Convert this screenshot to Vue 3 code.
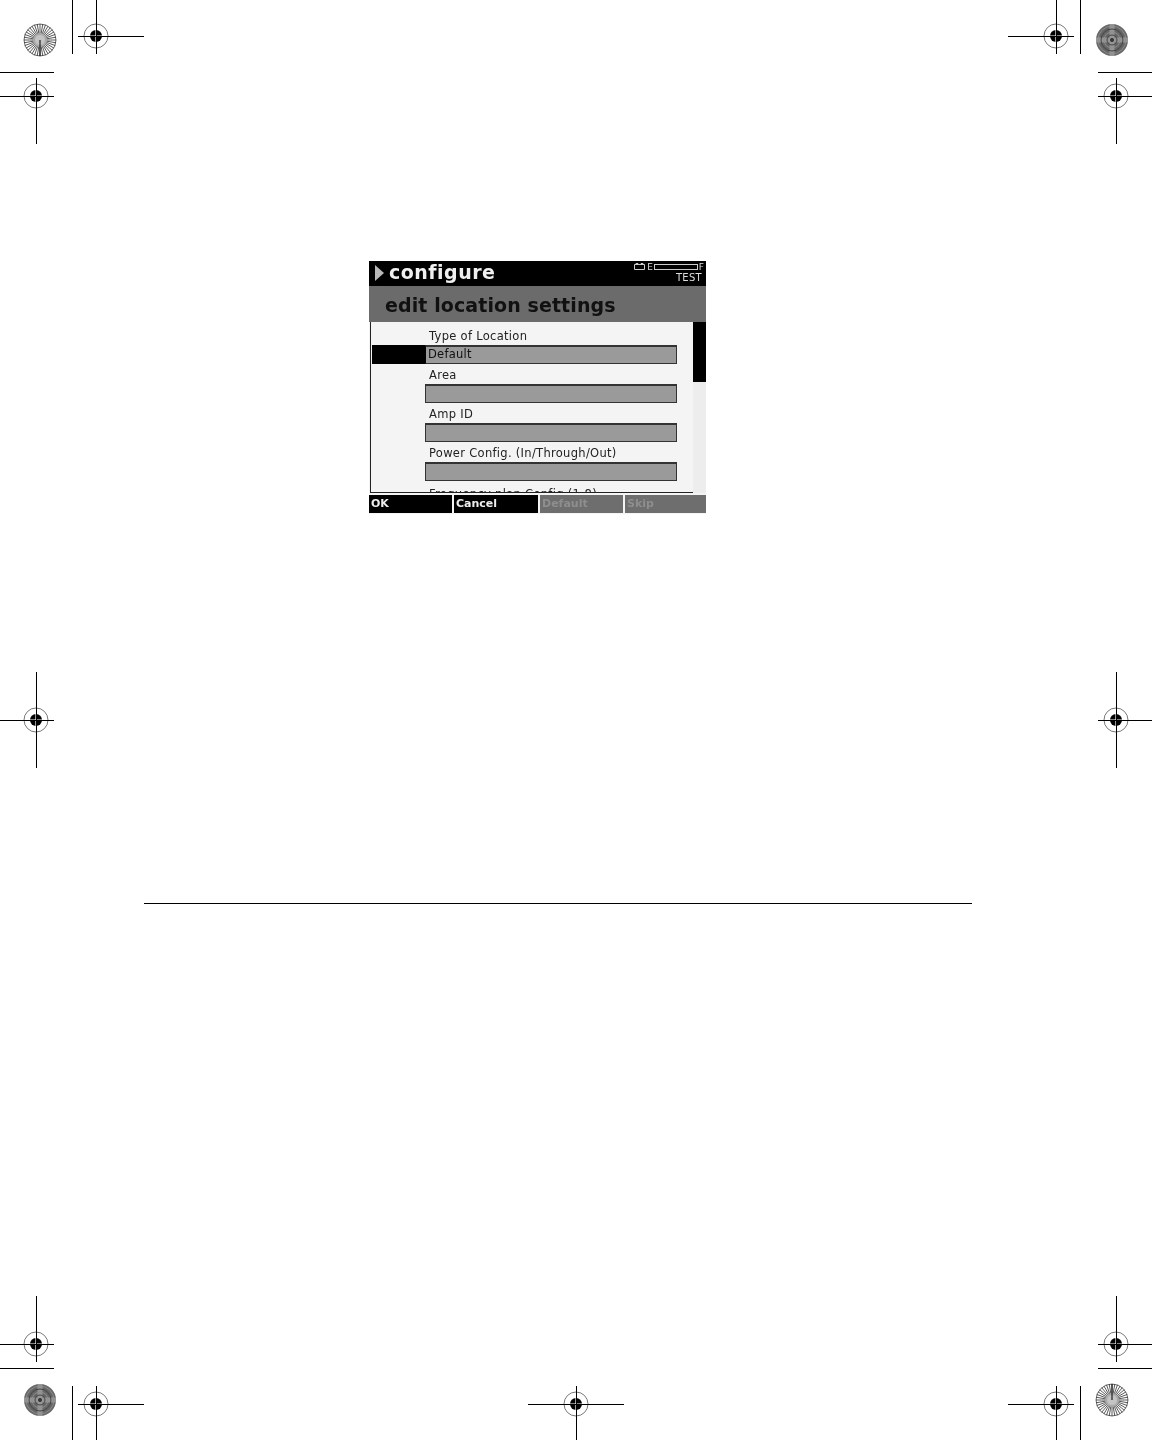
<template>
  <div class="page">
    <!-- printer's marks, each sits at its own spot on the sheet -->
    <svg class="marks" width="1152" height="1440" viewBox="0 0 1152 1440">
      <g stroke="#000" stroke-width="1" fill="none">
        <line
          v-for="(l, i) in trimLines"
          :key="'t' + i"
          :x1="l[0]"
          :y1="l[1]"
          :x2="l[2]"
          :y2="l[3]"
        />
      </g>
      <g v-for="m in regMarks" :key="m.x + '-' + m.y">
        <circle :cx="m.x" :cy="m.y" r="12" fill="none" stroke="#555" stroke-width="0.8" />
        <circle :cx="m.x" :cy="m.y" r="6" fill="#000" />
        <path
          :d="`M${m.x - 6} ${m.y}H${m.x + 6}M${m.x} ${m.y - 6}V${m.y + 6}`"
          stroke="#fff"
          stroke-width="1.2"
        />
        <path :d="m.cross" stroke="#000" stroke-width="1" fill="none" />
      </g>
      <g v-for="s in lightBursts" :key="s.x">
        <circle :cx="s.x" :cy="s.y" r="16" fill="#fff" stroke="#444" stroke-width="0.8" />
        <line
          v-for="(r, i) in rays(s.x, s.y)"
          :key="i"
          :x1="r[0]"
          :y1="r[1]"
          :x2="r[2]"
          :y2="r[3]"
          stroke="#222"
          stroke-width="0.75"
        />
        <circle :cx="s.x" :cy="s.y" r="7" fill="#b5b5b5" opacity="0.8" />
        <line :x1="s.x" :y1="s.y" :x2="s.x" :y2="s.tail" stroke="#000" stroke-width="1" />
      </g>
      <g v-for="s in darkBursts" :key="s.x">
        <circle :cx="s.x" :cy="s.y" r="16" fill="#666" />
        <path
          :d="`M${s.x - 16} ${s.y}H${s.x + 16}M${s.x} ${s.y - 16}V${s.y + 16}`"
          stroke="#a2a2a2"
          stroke-width="5"
          opacity="0.8"
        />
        <circle :cx="s.x" :cy="s.y" r="14" fill="none" stroke="#8c8c8c" stroke-width="1" />
        <circle :cx="s.x" :cy="s.y" r="11" fill="none" stroke="#444" stroke-width="1" />
        <circle :cx="s.x" :cy="s.y" r="8" fill="none" stroke="#8c8c8c" stroke-width="1" />
        <circle :cx="s.x" :cy="s.y" r="5" fill="none" stroke="#444" stroke-width="1" />
        <circle :cx="s.x" :cy="s.y" r="2" fill="#333" />
      </g>
    </svg>

    <div class="screen">
      <div class="top-bar">
        <span class="arrow"></span>
        <span class="app-name">configure</span>
        <div class="status">
          <div class="gauge">
            <svg class="batt" width="11" height="7" viewBox="0 0 11 7">
              <path d="M.5 1.5h10v5H.5zM2 1.5V.5h2v1M7 1.5V.5h2v1" fill="none" stroke="#ccc" />
            </svg>
            <span>E</span>
            <span class="gauge-bar"></span>
            <span>F</span>
          </div>
          <div class="mode">TEST</div>
        </div>
      </div>
      <div class="title-bar">edit location settings</div>
      <div class="body">
        <div class="list">
          <div v-for="(f, i) in fields" :key="f.label" class="item">
            <div class="label">{{ f.label }}</div>
            <div class="row">
              <span class="marker" :class="{ on: i === 0 }"></span>
              <div class="field" :class="{ on: i === 0 }">{{ f.value }}</div>
            </div>
          </div>
        </div>
        <div class="scrollbar"><div class="thumb"></div></div>
      </div>
      <div class="softkeys">
        <div
          v-for="k in softkeys"
          :key="k.text"
          class="key"
          :class="{ off: k.off }"
        >
          {{ k.text }}
        </div>
      </div>
    </div>

    <div class="rule"></div>
  </div>
</template>

<script setup>
const fields = [
  { label: "Type of Location", value: "Default" },
  { label: "Area", value: "" },
  { label: "Amp ID", value: "" },
  { label: "Power Config. (In/Through/Out)", value: "" },
  { label: "Frequency plan Config (1-8)", value: "" },
];

const softkeys = [
  { text: "OK", off: false },
  { text: "Cancel", off: false },
  { text: "Default", off: true },
  { text: "Skip", off: true },
];

// x, y, then how far each arm of the cross runs: left, right, up, down
const mark = (x, y, l, r, u, d) => ({
  x,
  y,
  cross: `M${x - l} ${y + 0.5}H${x + r}M${x + 0.5} ${y - u}V${y + d}`,
});

const regMarks = [
  mark(96, 36, 18, 48, 36, 18),
  mark(36, 96, 36, 18, 18, 48),
  mark(1056, 36, 48, 18, 36, 18),
  mark(1116, 96, 18, 36, 18, 48),
  mark(36, 720, 36, 18, 48, 48),
  mark(1116, 720, 18, 36, 48, 48),
  mark(36, 1344, 36, 18, 48, 18),
  mark(1116, 1344, 18, 36, 48, 18),
  mark(96, 1404, 18, 48, 18, 36),
  mark(1056, 1404, 48, 18, 18, 36),
  mark(576, 1404, 48, 48, 18, 36),
];

const trimLines = [
  [72.5, 0, 72.5, 54],
  [0, 72.5, 54, 72.5],
  [1080.5, 0, 1080.5, 54],
  [1098, 72.5, 1152, 72.5],
  [0, 1368.5, 54, 1368.5],
  [72.5, 1386, 72.5, 1440],
  [1098, 1368.5, 1152, 1368.5],
  [1080.5, 1386, 1080.5, 1440],
];

const lightBursts = [
  { x: 40, y: 40, tail: 56 },
  { x: 1112, y: 1400, tail: 1384 },
];

const darkBursts = [
  { x: 1112, y: 40 },
  { x: 40, y: 1400 },
];

const rays = (cx, cy) => {
  const out = [];
  for (let i = 0; i < 36; i++) {
    const a = (i * Math.PI) / 18;
    out.push([
      cx + Math.cos(a) * 5,
      cy + Math.sin(a) * 5,
      cx + Math.cos(a) * 16,
      cy + Math.sin(a) * 16,
    ]);
  }
  return out;
};
</script>

<style scoped>
.page {
  position: relative;
  width: 1152px;
  height: 1440px;
  padding-top: 261px;
  box-sizing: border-box;
  background: #fff;
  overflow: hidden;
  font-family: "DejaVu Sans", sans-serif;
}

.marks {
  position: absolute;
  left: 0;
  top: 0;
}

.screen {
  width: 337px;
  height: 253px;
  margin-left: 369px;
  display: flex;
  flex-direction: column;
  background: #f4f4f4;
  filter: blur(0.4px);
}

.top-bar {
  height: 25px;
  box-sizing: border-box;
  display: flex;
  align-items: center;
  background: #000;
  color: #f0f0f0;
  padding: 0 4px 1px 6px;
}

.arrow {
  width: 0;
  height: 0;
  border-left: 9px solid #b8b8b8;
  border-top: 8px solid transparent;
  border-bottom: 8px solid transparent;
  margin-right: 5px;
}

.app-name {
  font-size: 19px;
  font-weight: bold;
  letter-spacing: 0.5px;
  margin-bottom: 3px;
}

.status {
  margin-left: auto;
  align-self: flex-start;
  padding-top: 2px;
  font-size: 10px;
  color: #ddd;
}

.gauge {
  display: flex;
  align-items: center;
  height: 7px;
  font-size: 9px;
  margin-right: -2px;
  gap: 1px;
}

.gauge-bar {
  width: 44px;
  height: 6px;
  border: 1px solid #ccc;
  box-sizing: border-box;
}

.batt {
  margin-right: 1px;
}

.mode {
  text-align: right;
  margin-top: 2px;
  letter-spacing: 0.3px;
}

.title-bar {
  height: 36px;
  line-height: 39px;
  padding-left: 16px;
  background: #6b6b6b;
  color: #111;
  font-size: 19px;
  font-weight: bold;
  letter-spacing: 0.1px;
  white-space: nowrap;
}

.body {
  height: 171px;
  display: flex;
}

.list {
  flex: 1;
  margin-left: 1px;
  border-left: 1px solid #222;
  border-bottom: 1px solid #222;
  overflow: hidden;
  padding-top: 3px;
  padding-right: 16px;
}

.item {
  height: 39px;
}

.label {
  height: 20px;
  line-height: 22px;
  padding-left: 58px;
  font-size: 11.5px;
  color: #222;
  letter-spacing: 0.3px;
  white-space: nowrap;
}

/* only the tops of this row show above the fold */
.item:last-child .label {
  padding-top: 2px;
}

.row {
  display: flex;
}

.marker {
  width: 53px;
  height: 19px;
  margin-left: 1px;
}

.marker.on {
  background: #000;
}

.field {
  flex: 1;
  height: 19px;
  box-sizing: border-box;
  border: 1px solid #333;
  border-top-width: 2px;
  background: #9a9a9a;
  color: #111;
  font-size: 11.5px;
  line-height: 14px;
  padding-left: 2px;
  letter-spacing: 0.25px;
}

.field.on {
  border-left-color: #000;
}

.scrollbar {
  width: 13px;
  background: #ededed;
}

.thumb {
  height: 60px;
  background: #000;
}

.softkeys {
  margin-top: 2px;
  height: 18px;
  display: grid;
  grid-template-columns: 83px 84px 83px 81px;
  column-gap: 2px;
}

.key {
  background: #000;
  color: #eee;
  font-size: 11px;
  font-weight: bold;
  line-height: 17px;
  padding-left: 2px;
}

.key.off {
  background: #6e6e6e;
  color: #8e8e8e;
}

.rule {
  width: 828px;
  height: 1px;
  margin-top: 389px;
  margin-left: 144px;
  background: #000;
}
</style>
